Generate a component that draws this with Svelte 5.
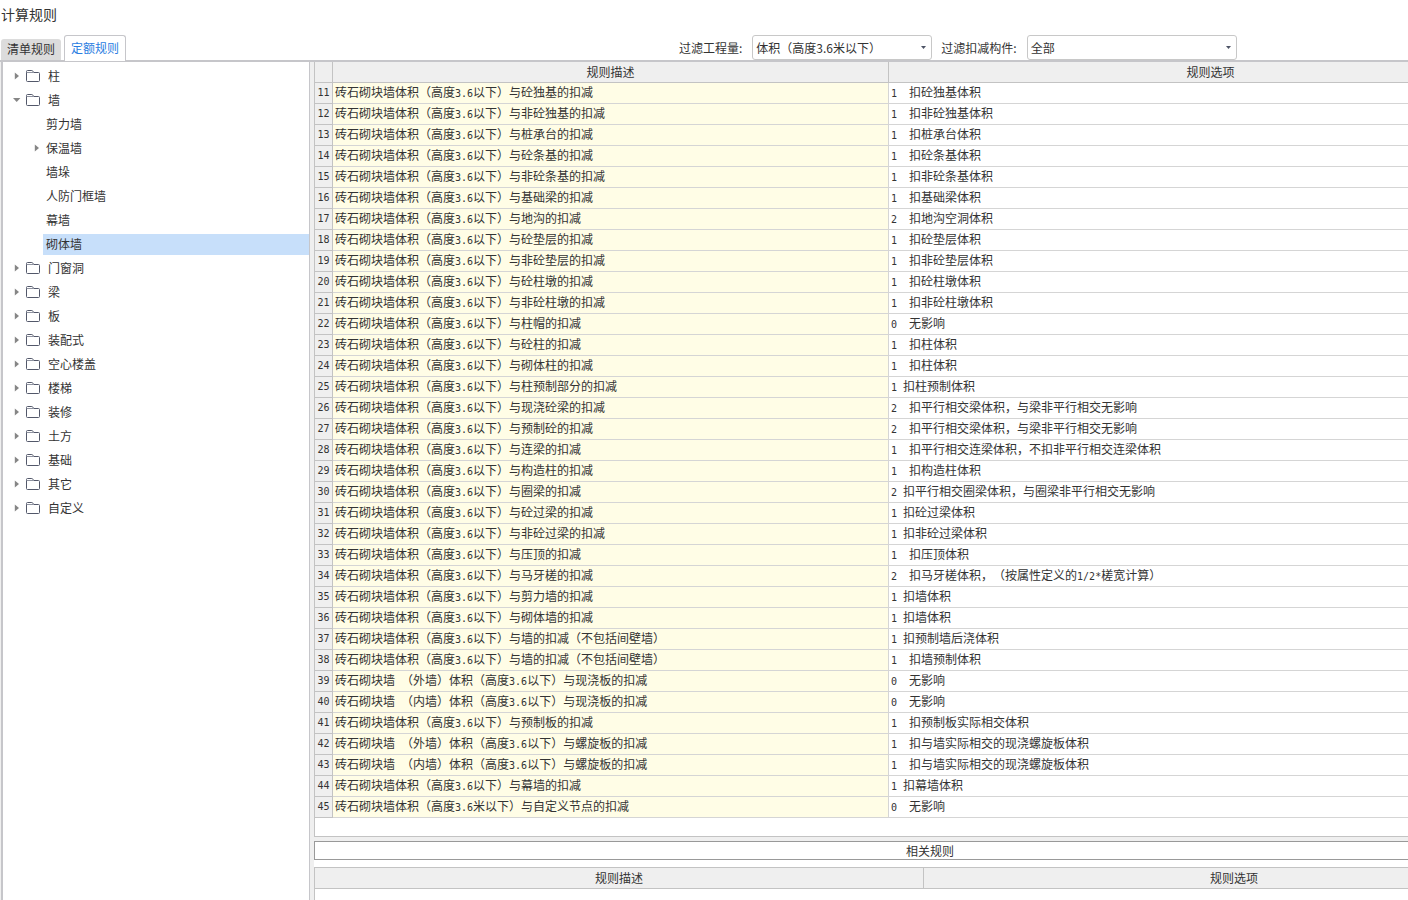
<script>
	const tabs = ['清单规则', '定额规则'];
	let activeTab = $state('定额规则');

	let quantity = $state('体积（高度3.6米以下）');
	let member = $state('全部');

	let selected = $state('砌体墙');
	let tree = $state([
		{ name: '柱', open: false },
		{
			name: '墙',
			open: true,
			children: [
				{ name: '剪力墙' },
				{ name: '保温墙', branch: true },
				{ name: '墙垛' },
				{ name: '人防门框墙' },
				{ name: '幕墙' },
				{ name: '砌体墙' }
			]
		},
		{ name: '门窗洞', open: false },
		{ name: '梁', open: false },
		{ name: '板', open: false },
		{ name: '装配式', open: false },
		{ name: '空心楼盖', open: false },
		{ name: '楼梯', open: false },
		{ name: '装修', open: false },
		{ name: '土方', open: false },
		{ name: '基础', open: false },
		{ name: '其它', open: false },
		{ name: '自定义', open: false }
	]);

	// most rules share the same beginning
	const base = '砖石砌块墙体积（高度3.6以下）与';
	const outer = '砖石砌块墙 （外墙）体积（高度3.6以下）与';
	const inner = '砖石砌块墙 （内墙）体积（高度3.6以下）与';

	const firstRow = 11;
	const rules = [
		[base + '砼独基的扣减', '1  扣砼独基体积'],
		[base + '非砼独基的扣减', '1  扣非砼独基体积'],
		[base + '桩承台的扣减', '1  扣桩承台体积'],
		[base + '砼条基的扣减', '1  扣砼条基体积'],
		[base + '非砼条基的扣减', '1  扣非砼条基体积'],
		[base + '基础梁的扣减', '1  扣基础梁体积'],
		[base + '地沟的扣减', '2  扣地沟空洞体积'],
		[base + '砼垫层的扣减', '1  扣砼垫层体积'],
		[base + '非砼垫层的扣减', '1  扣非砼垫层体积'],
		[base + '砼柱墩的扣减', '1  扣砼柱墩体积'],
		[base + '非砼柱墩的扣减', '1  扣非砼柱墩体积'],
		[base + '柱帽的扣减', '0  无影响'],
		[base + '砼柱的扣减', '1  扣柱体积'],
		[base + '砌体柱的扣减', '1  扣柱体积'],
		[base + '柱预制部分的扣减', '1 扣柱预制体积'],
		[base + '现浇砼梁的扣减', '2  扣平行相交梁体积，与梁非平行相交无影响'],
		[base + '预制砼的扣减', '2  扣平行相交梁体积，与梁非平行相交无影响'],
		[base + '连梁的扣减', '1  扣平行相交连梁体积，不扣非平行相交连梁体积'],
		[base + '构造柱的扣减', '1  扣构造柱体积'],
		[base + '圈梁的扣减', '2 扣平行相交圈梁体积，与圈梁非平行相交无影响'],
		[base + '砼过梁的扣减', '1 扣砼过梁体积'],
		[base + '非砼过梁的扣减', '1 扣非砼过梁体积'],
		[base + '压顶的扣减', '1  扣压顶体积'],
		[base + '马牙槎的扣减', '2  扣马牙槎体积，（按属性定义的1/2*槎宽计算）'],
		[base + '剪力墙的扣减', '1 扣墙体积'],
		[base + '砌体墙的扣减', '1 扣墙体积'],
		[base + '墙的扣减（不包括间壁墙）', '1 扣预制墙后浇体积'],
		[base + '墙的扣减（不包括间壁墙）', '1  扣墙预制体积'],
		[outer + '现浇板的扣减', '0  无影响'],
		[inner + '现浇板的扣减', '0  无影响'],
		[base + '预制板的扣减', '1  扣预制板实际相交体积'],
		[outer + '螺旋板的扣减', '1  扣与墙实际相交的现浇螺旋板体积'],
		[inner + '螺旋板的扣减', '1  扣与墙实际相交的现浇螺旋板体积'],
		[base + '幕墙的扣减', '1 扣幕墙体积'],
		['砖石砌块墙体积（高度3.6米以下）与自定义节点的扣减', '0  无影响']
	];

	// split into half-width and full-width runs
	const runs = (text) => text.match(/[ -~]+|[^ -~]+/g);
	const isLatin = (run) => /^[ -~]/.test(run);
</script>

{#snippet caret(open)}
	{#if open}
		<svg width="8" height="8" viewBox="0 0 8 8"><path d="M0 2h7.4L3.7 6z" fill="#868686" /></svg>
	{:else}
		<svg width="8" height="8" viewBox="0 0 8 8"><path d="M1.8 0.5v7L6 4z" fill="#868686" /></svg>
	{/if}
{/snippet}

{#snippet folder()}
	<svg class="folder" width="14" height="12" viewBox="0 0 14 12" fill="none" stroke="#53586a">
		<path d="M0.5 10V1.5q0-1 1-1h4.3q0.7 0 1 0.6l0.9 1.4h4.8q1 0 1 1V10.5q0 1-1 1h-11q-1 0-1-1z" />
		<path d="M0.5 2.5h7" stroke="#8f93a0" />
	</svg>
{/snippet}

{#snippet cellText(text)}
	{#each runs(text) as run}<span class:latin={isLatin(run)}>{run}</span>{/each}
{/snippet}

{#snippet dropArrow()}
	<svg class="drop" width="5" height="3" viewBox="0 0 5 3"><path d="M0 0h5L2.5 3z" fill="#4d5466" /></svg>
{/snippet}

<div class="window">
	<h1>计算规则</h1>

	<div class="toolbar">
		<div class="tabs" role="tablist">
			{#each tabs as tab}
				<button
					role="tab"
					class="tab"
					class:active={activeTab === tab}
					aria-selected={activeTab === tab}
					onclick={() => (activeTab = tab)}>{tab}</button>
			{/each}
		</div>
		<div class="filters">
			<label for="quantity">过滤工程量:</label>
			<div class="select quantity">
				<select id="quantity" bind:value={quantity}>
					<option>体积（高度3.6米以下）</option>
				</select>
				{@render dropArrow()}
			</div>
			<label for="member">过滤扣减构件:</label>
			<div class="select member">
				<select id="member" bind:value={member}>
					<option>全部</option>
				</select>
				{@render dropArrow()}
			</div>
		</div>
	</div>

	<div class="body">
		<ul class="tree">
			{#each tree as node}
				<li>
					<div class="node">
						<button class="toggle" aria-label={node.name} onclick={() => (node.open = !node.open)}>
							{@render caret(node.open)}
						</button>
						{@render folder()}
						<button
							class="name"
							class:selected={selected === node.name}
							onclick={() => (selected = node.name)}>{node.name}</button>
					</div>
					{#if node.open && node.children}
						<ul>
							{#each node.children as child}
								<li class="node child">
									<span class="toggle">
										{#if child.branch}{@render caret(false)}{/if}
									</span>
									<button
										class="name"
										class:selected={selected === child.name}
										onclick={() => (selected = child.name)}>{child.name}</button>
								</li>
							{/each}
						</ul>
					{/if}
				</li>
			{/each}
		</ul>

		<div class="content">
			<div class="pane rules">
				<table>
					<colgroup>
						<col class="col-num" />
						<col class="col-desc" />
						<col />
					</colgroup>
					<thead>
						<tr>
							<th></th>
							<th>规则描述</th>
							<th>规则选项</th>
						</tr>
					</thead>
					<tbody>
						{#each rules as [desc, option], i}
							<tr>
								<th class="num" scope="row">{firstRow + i}</th>
								<td class="desc">{@render cellText(desc)}</td>
								<td>{@render cellText(option)}</td>
							</tr>
						{/each}
					</tbody>
				</table>
			</div>

			<div class="lower">
				<h2>相关规则</h2>

				<div class="pane related">
					<table>
						<colgroup>
							<col class="col-related" />
							<col />
						</colgroup>
						<thead>
							<tr>
								<th>规则描述</th>
								<th>规则选项</th>
							</tr>
						</thead>
					</table>
				</div>
			</div>
		</div>
	</div>
</div>

<style>
	:global(body) {
		margin: 0;
		overflow: hidden;
		background: #fff;
	}

	.window {
		display: flex;
		flex-direction: column;
		height: 100vh;
		overflow: hidden;
		color: #333;
		font-family: 'Noto Sans CJK SC', sans-serif;
		font-size: 12px;
		text-spacing-trim: space-all;
	}

	button,
	select {
		margin: 0;
		padding: 0;
		border: 0;
		background: none;
		color: inherit;
		font: inherit;
	}

	h1 {
		margin: 0;
		padding: 4px 1px 6px;
		font-size: 14px;
		font-weight: 400;
		line-height: 20px;
	}

	/* tabs and filters */
	.toolbar {
		display: flex;
		flex: none;
		gap: 553px;
		height: 30px;
		padding-left: 1px;
		border-bottom: 2px solid #c6c6ca;
	}

	.tabs {
		display: flex;
		align-items: flex-end;
		gap: 3px;
	}

	.tab {
		width: 60px;
		height: 21px;
		padding-bottom: 2px;
		border-radius: 3px 3px 0 0;
		background: #dcdcdc;
		line-height: 18px;
		white-space: nowrap;
	}

	.tab.active {
		width: 62px;
		height: 26px;
		margin-bottom: -1px;
		border: 1px solid #c6c6ca;
		border-bottom: 0;
		background: #fff;
		color: #2a7de1;
	}

	.filters {
		display: flex;
		align-items: flex-end;
		white-space: nowrap;
	}

	.filters label {
		margin-right: 10px;
		line-height: 24px;
	}

	.select {
		display: grid;
		align-items: center;
		height: 25px;
		box-sizing: border-box;
		margin-right: 9px;
		border: 1px solid #c8c8c8;
		border-radius: 3px;
	}

	.quantity {
		width: 180px;
	}

	.member {
		width: 210px;
	}

	.select select {
		grid-area: 1 / 1;
		width: 100%;
		height: 23px;
		padding-left: 3px;
		appearance: none;
		outline: none;
	}

	.drop {
		grid-area: 1 / 1;
		justify-self: end;
		margin-right: 5px;
		pointer-events: none;
	}

	/* component tree */
	.body {
		display: flex;
		flex: 1;
		min-height: 0;
		background: #efefef;
	}

	ul {
		margin: 0;
		padding: 0;
		list-style: none;
	}

	.tree {
		flex: none;
		box-sizing: border-box;
		width: 309px;
		margin: 0 4px 0 1px;
		padding-top: 2px;
		border-left: 2px solid #c6c6ca;
		border-right: 1px solid #c6c6ca;
		background: #fff;
	}

	.node {
		display: flex;
		align-items: center;
		height: 24px;
		padding-left: 10px;
	}

	.child {
		padding-left: 30px;
	}

	.toggle {
		display: flex;
		width: 8px;
	}

	.child .toggle {
		width: 10px;
	}

	.folder {
		margin: 0 5px;
	}

	.name {
		flex: 1;
		height: 21px;
		padding-left: 3px;
		line-height: 20px;
		text-align: left;
	}

	.selected {
		background: #c7dffa;
	}

	/* rule tables, wider than the window on small screens */
	.content {
		display: flex;
		flex: 1 0 0;
		flex-direction: column;
		min-width: 1232px;
	}

	.pane {
		border: 1px solid #c3c3c3;
		background: #fff;
	}

	.rules {
		padding: 0 12px 18px 0;
		border-top: 0;
	}

	table {
		width: 100%;
		border-spacing: 0;
		table-layout: fixed;
	}

	.col-num {
		width: 18px;
	}

	.col-desc {
		width: 556px;
	}

	.col-related {
		width: 609px;
	}

	th,
	td {
		box-sizing: border-box;
		height: 21px;
		padding: 0;
		border-right: 1px solid #d5d5d5;
		border-bottom: 1px solid #d5d5d5;
		line-height: 20px;
		white-space: nowrap;
	}

	th {
		border-color: #c3c3c3;
		background: #efefef;
		font-weight: 400;
		text-align: center;
	}

	td {
		padding: 0 2px 2px;
		line-height: 18px;
		white-space: pre;
	}

	.desc {
		background: #fffde6;
	}

	.num,
	.latin {
		font-family: 'DejaVu Sans Mono', monospace;
		font-size: 10px;
	}

	.latin {
		line-height: 1;
	}

	.lower {
		display: flex;
		flex: 1;
		flex-direction: column;
		gap: 7px;
		margin-top: 4px;
		background: #fff;
	}

	h2 {
		margin: 0;
		border: 1px solid #999;
		font-size: 12px;
		font-weight: 400;
		line-height: 17px;
		text-align: center;
	}

	.related {
		flex: 1;
		border-bottom: 0;
	}
</style>
